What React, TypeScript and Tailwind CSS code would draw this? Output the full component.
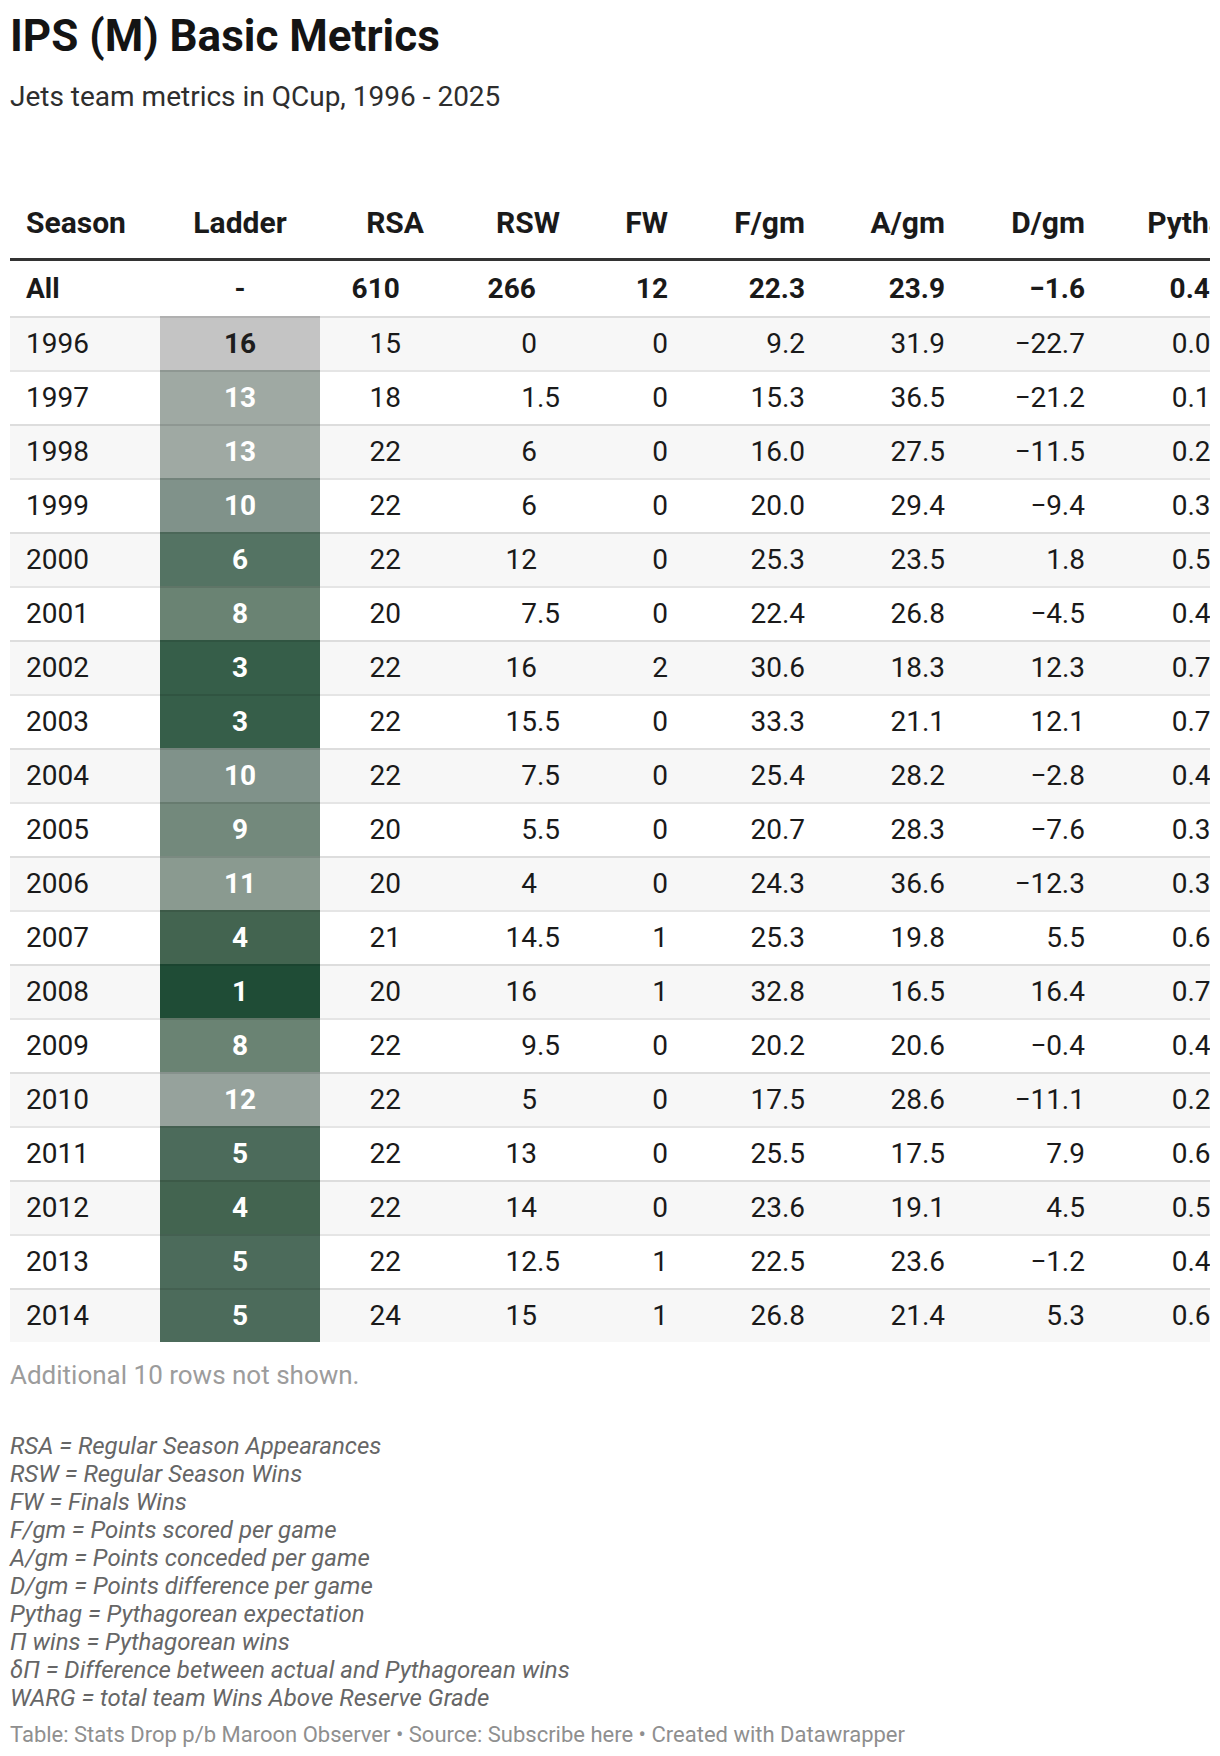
import React from 'react';

type Row = {
	season: string;
	ladder: number | null;
	rsa: number;
	rsw: number;
	fw: number;
	f: number;
	a: number;
	d: number;
};

const rows: Row[] = [
	{ season: '1996', ladder: 16, rsa: 15, rsw: 0, fw: 0, f: 9.2, a: 31.9, d: -22.7 },
	{ season: '1997', ladder: 13, rsa: 18, rsw: 1.5, fw: 0, f: 15.3, a: 36.5, d: -21.2 },
	{ season: '1998', ladder: 13, rsa: 22, rsw: 6, fw: 0, f: 16.0, a: 27.5, d: -11.5 },
	{ season: '1999', ladder: 10, rsa: 22, rsw: 6, fw: 0, f: 20.0, a: 29.4, d: -9.4 },
	{ season: '2000', ladder: 6, rsa: 22, rsw: 12, fw: 0, f: 25.3, a: 23.5, d: 1.8 },
	{ season: '2001', ladder: 8, rsa: 20, rsw: 7.5, fw: 0, f: 22.4, a: 26.8, d: -4.5 },
	{ season: '2002', ladder: 3, rsa: 22, rsw: 16, fw: 2, f: 30.6, a: 18.3, d: 12.3 },
	{ season: '2003', ladder: 3, rsa: 22, rsw: 15.5, fw: 0, f: 33.3, a: 21.1, d: 12.1 },
	{ season: '2004', ladder: 10, rsa: 22, rsw: 7.5, fw: 0, f: 25.4, a: 28.2, d: -2.8 },
	{ season: '2005', ladder: 9, rsa: 20, rsw: 5.5, fw: 0, f: 20.7, a: 28.3, d: -7.6 },
	{ season: '2006', ladder: 11, rsa: 20, rsw: 4, fw: 0, f: 24.3, a: 36.6, d: -12.3 },
	{ season: '2007', ladder: 4, rsa: 21, rsw: 14.5, fw: 1, f: 25.3, a: 19.8, d: 5.5 },
	{ season: '2008', ladder: 1, rsa: 20, rsw: 16, fw: 1, f: 32.8, a: 16.5, d: 16.4 },
	{ season: '2009', ladder: 8, rsa: 22, rsw: 9.5, fw: 0, f: 20.2, a: 20.6, d: -0.4 },
	{ season: '2010', ladder: 12, rsa: 22, rsw: 5, fw: 0, f: 17.5, a: 28.6, d: -11.1 },
	{ season: '2011', ladder: 5, rsa: 22, rsw: 13, fw: 0, f: 25.5, a: 17.5, d: 7.9 },
	{ season: '2012', ladder: 4, rsa: 22, rsw: 14, fw: 0, f: 23.6, a: 19.1, d: 4.5 },
	{ season: '2013', ladder: 5, rsa: 22, rsw: 12.5, fw: 1, f: 22.5, a: 23.6, d: -1.2 },
	{ season: '2014', ladder: 5, rsa: 24, rsw: 15, fw: 1, f: 26.8, a: 21.4, d: 5.3 },
];

const total: Row = { season: 'All', ladder: null, rsa: 610, rsw: 266, fw: 12, f: 22.3, a: 23.9, d: -1.6 };

// ladder position -> cell colour (gray for last, dark green for first)
const ladderTone: Record<number, string> = {
	1: 'bg-[#1f4c36] text-white',
	3: 'bg-[#365e49] text-white',
	4: 'bg-[#436450] text-white',
	5: 'bg-[#4c6b5b] text-white',
	6: 'bg-[#547363] text-white',
	8: 'bg-[#6a8373] text-white',
	9: 'bg-[#73897c] text-white',
	10: 'bg-[#80928a] text-white',
	11: 'bg-[#8a9a90] text-white',
	12: 'bg-[#96a29c] text-white',
	13: 'bg-[#9fa9a3] text-white',
	16: 'bg-[#c4c4c4] text-[#1d1d1d]',
};

const cols =
	'grid w-max grid-cols-[150px_160px_120px_136px_108px_137px_140px_140px_157px]';

const signed = (n: number) => (n < 0 ? '\u2212' + Math.abs(n).toFixed(1) : n.toFixed(1));

const pythag = (f: number, a: number) => {
	const k = 1.9;
	return (Math.pow(f, k) / (Math.pow(f, k) + Math.pow(a, k))).toFixed(3);
};

// integers in the count columns sit on the decimal point
function Aligned({ value }: { value: number }) {
	const whole = Number.isInteger(value);
	return (
		<>
			{value}
			{whole && <span className="invisible">.5</span>}
		</>
	);
}

function Cells({ r, h }: { r: Row; h: string }) {
	const cell = `flex ${h} items-center`;
	const num = `${cell} justify-end pr-4`;
	return (
		<>
			<div className={`${cell} pl-4`}>{r.season}</div>
			<div
				className={`${cell} justify-center font-bold ${r.ladder ? ladderTone[r.ladder] : ''}`}
			>
				{r.ladder ?? '-'}
			</div>
			<div className={num}>
				<Aligned value={r.rsa} />
			</div>
			<div className={num}>
				<Aligned value={r.rsw} />
			</div>
			<div className={num}>{r.fw}</div>
			<div className={num}>{r.f.toFixed(1)}</div>
			<div className={num}>{r.a.toFixed(1)}</div>
			<div className={num}>{signed(r.d)}</div>
			<div className={num}>{pythag(r.f, r.a)}</div>
		</>
	);
}

const notes = [
	'RSA = Regular Season Appearances',
	'RSW = Regular Season Wins',
	'FW = Finals Wins',
	'F/gm = Points scored per game',
	'A/gm = Points conceded per game',
	'D/gm = Points difference per game',
	'Pythag = Pythagorean expectation',
	'\u03A0 wins = Pythagorean wins',
	'\u03B4\u03A0 = Difference between actual and Pythagorean wins',
	'WARG = total team Wins Above Reserve Grade',
];

const head = ['RSA', 'RSW', 'FW', 'F/gm', 'A/gm', 'D/gm', 'Pythag'];

export default function App() {
	return (
		<div className="min-h-[1756px] w-[1220px] bg-white px-[10px] pt-[11px] font-['Roboto',sans-serif] text-[#1a1a1a]">
			<h1 className="text-[44px] leading-[50px] font-bold text-[#141414]">
				IPS (M) Basic Metrics
			</h1>
			<p className="mt-[20px] text-[28px] leading-[32px] text-[#2e2e2e]">
				Jets team metrics in QCup, 1996 - 2025
			</p>

			<div className="mt-[80px] overflow-hidden text-[28px] leading-[32px]">
				<div className={`${cols} h-[68px] border-b-[3px] border-[#333333] text-[30px] font-bold`}>
					<div className="flex items-end pb-[19px] pl-4">Season</div>
					<div className="flex items-end justify-center pb-[19px]">Ladder</div>
					{head.map((h) => (
						<div key={h} className="flex items-end justify-end pr-4 pb-[19px]">
							{h}
						</div>
					))}
				</div>

				<div className={`${cols} bg-white font-bold`}>
					<Cells r={total} h="h-[55px]" />
				</div>

				{rows.map((r, i) => (
					<div
						key={r.season}
						className={`${cols} ${i % 2 === 0 ? 'bg-[#f7f7f7]' : 'bg-white'} [&>div]:box-content [&>div]:border-t-2 [&>div]:border-black/10`}
					>
						<Cells r={r} h="h-[52px]" />
					</div>
				))}
			</div>

			<p className="mt-[17px] text-[26px] leading-[32px] text-[#9c9c9c]">
				Additional 10 rows not shown.
			</p>

			<div className="mt-[41px] flex flex-col text-[24px] leading-[28px] text-[#666666] italic">
				{notes.map((n) => (
					<span key={n}>{n}</span>
				))}
			</div>

			<p className="mt-[10px] text-[22px] leading-[26px] text-[#8f8f8f]">
				Table: Stats Drop p/b Maroon Observer • Source: Subscribe here • Created with Datawrapper
			</p>
		</div>
	);
}
